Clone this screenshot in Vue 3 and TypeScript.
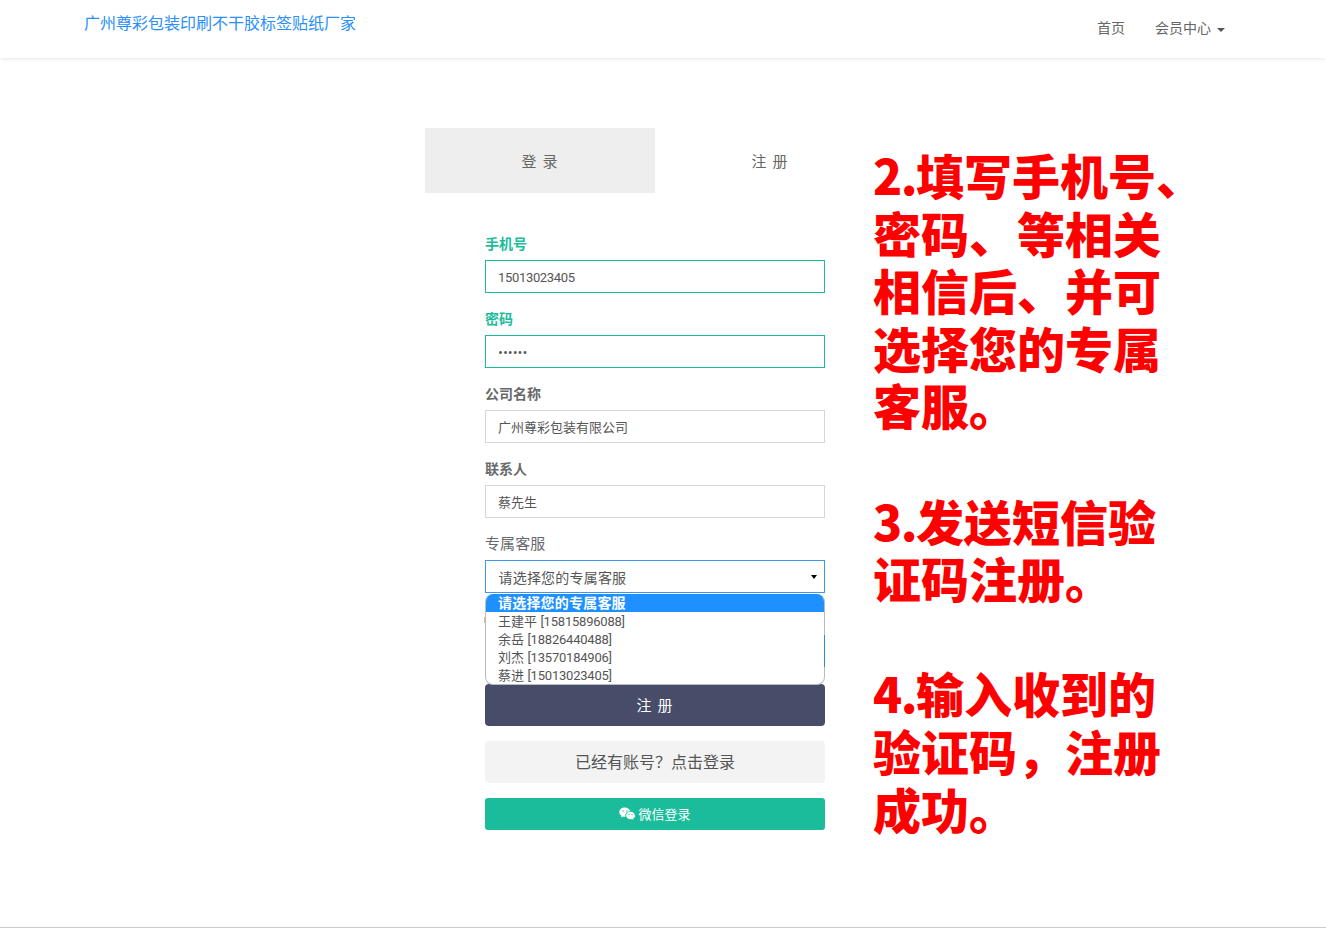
<script setup lang="ts">
interface Agent { name: string; phone: string }
const agents: Agent[] = [
  { name: '王建平', phone: '[15815896088]' },
  { name: '余岳', phone: '[18826440488]' },
  { name: '刘杰', phone: '[13570184906]' },
  { name: '蔡进', phone: '[15013023405]' },
]
</script>

<template>
  <div class="page">
    <header class="navbar">
      <a class="brand">广州尊彩包装印刷不干胶标签贴纸厂家</a>
      <nav class="nav">
        <a>首页</a>
        <a class="member">会员中心<i class="caret"></i></a>
      </nav>
    </header>

    <main class="main">
      <div class="panel">
        <div class="tabs">
          <div class="tab active">登 录</div>
          <div class="tab">注 册</div>
        </div>
        <form class="form" @submit.prevent>
          <div class="group valid">
            <label>手机号</label>
            <input class="digits" type="text" value="15013023405" />
          </div>
          <div class="group valid">
            <label>密码</label>
            <input type="password" value="123456" />
          </div>
          <div class="group">
            <label>公司名称</label>
            <input type="text" value="广州尊彩包装有限公司" />
          </div>
          <div class="group">
            <label>联系人</label>
            <input type="text" value="蔡先生" />
          </div>
          <div class="group select-group">
            <label class="plain">专属客服</label>
            <div class="select">
              <span>请选择您的专属客服</span>
              <i class="arrow"></i>
            </div>
            <ul class="options">
              <li class="selected">请选择您的专属客服</li>
              <li v-for="a in agents" :key="a.phone">{{ a.name }} <span class="phone">{{ a.phone }}</span></li>
            </ul>
          </div>
          <div class="group hidden-row">
            <i class="tick"></i>
            <i class="edge"></i>
          </div>
          <button type="submit" class="btn btn-dark">注 册</button>
          <button type="button" class="btn btn-light">已经有账号？点击登录</button>
          <button type="button" class="btn-wechat">
            <svg class="wechat" viewBox="0 0 16 14" width="16" height="14" aria-hidden="true">
              <path d="M6 .6C2.8.6.3 2.700.3 5.200c0 1.500.8 2.700 2.200 3.600l-.6 1.700 2-1.100c.6.2 1.300.3 2 .3h.6a4 4 0 0 1-.2-1.200c0-2.400 2.200-4.200 4.800-4.200h.5C10.100 2.200 8.200.6 6 .6z" fill="#fff" />
              <path d="M15.800 8.500c0-2-2-3.700-4.300-3.700-2.500 0-4.400 1.700-4.400 3.700s1.900 3.700 4.400 3.700c.5 0 1-.1 1.500-.2l1.500.8-.4-1.300c1.300-.8 2.700-1.800 2.700-3z" fill="#fff" />
              <circle cx="4.100" cy="3.900" r=".7" fill="#1abc9c" />
              <circle cx="7.900" cy="3.900" r=".7" fill="#1abc9c" />
              <circle cx="10" cy="7.400" r=".55" fill="#1abc9c" />
              <circle cx="13" cy="7.400" r=".55" fill="#1abc9c" />
            </svg>
            <span>微信登录</span>
          </button>
        </form>
        <div class="steps"><span class="num">2.</span>填写手机号、<br />密码、等相关<br />相信后、并可<br />选择您的专属<br />客服。<br /><br /><span class="num">3.</span>发送短信验<br />证码注册。<br /><br /><span class="num">4.</span>输入收到的<br />验证码，注册<br />成功。</div>
      </div>
    </main>
    <footer class="footer"></footer>
  </div>
</template>

<style>
html, body { margin: 0; padding: 0; background: #fff; overflow: hidden; }
</style>

<style scoped>
.page {
  height: 928px;
  display: flex;
  flex-direction: column;
  overflow: hidden;
  font-family: "Open Sans", "Noto Sans CJK SC", sans-serif;
  color: #676a6c;
}
.navbar {
  height: 58px;
  flex: none;
  display: flex;
  justify-content: space-between;
  padding: 0 101px 0 84px;
  box-shadow: 0 1px 4px rgba(0, 0, 0, 0.1);
  background: #fff;
}
.brand { font-size: 16px; line-height: 24px; margin-top: 11px; color: #2a8ff7; }
.nav { display: flex; gap: 30px; font-size: 14px; line-height: 20px; margin-top: 18px; color: #666; }
.member { display: flex; align-items: center; height: 20px; }
.caret {
  width: 0; height: 0; margin-left: 6px; margin-top: 3px;
  border-left: 4px solid transparent;
  border-right: 4px solid transparent;
  border-top: 4px solid #555;
}
.main { flex: 1; padding: 70px 0 0 425px; }
.panel { position: relative; width: 460px; }
.tabs { display: flex; height: 65px; }
.tab {
  width: 230px;
  display: flex; align-items: center; justify-content: center;
  font-size: 15px; letter-spacing: 1px; color: #666;
}
.tab.active { background: #eee; }
.form { padding: 41px 60px 0; display: flex; flex-direction: column; }
.group { position: relative; margin-bottom: 16px; }
label { display: block; height: 20px; line-height: 20px; margin-bottom: 6px; font-size: 14px; font-weight: 700; color: #676a6c; }
label.plain { font-size: 15px; line-height: 18px; font-weight: 400; letter-spacing: 0.1px; }
input {
  display: block; box-sizing: border-box; width: 100%; height: 33px;
  padding: 0 12px; border: 1px solid #d2d6de; border-radius: 0; outline: none;
  font-family: inherit; font-size: 13px; color: #555; background: #fff;
}
input.digits { font-family: Roboto, "Noto Sans CJK SC", sans-serif; letter-spacing: -0.33px; padding-top: 2px; }
.valid label { color: #1abc9c; }
.valid input { border-color: #1abc9c; }
.select {
  box-sizing: border-box; height: 33px; display: flex; align-items: center; justify-content: space-between;
  padding: 0 7px 0 12.500px; border: 1px solid #4096ee; font-size: 14px; letter-spacing: 0.2px; color: #555;
}
.arrow {
  width: 0; height: 0; margin-top: 1px;
  border-left: 3.5px solid transparent;
  border-right: 3.5px solid transparent;
  border-top: 4px solid #000;
}
.options {
  position: absolute; z-index: 2; left: 0; right: 0; top: 60px;
  box-sizing: border-box; height: 91px; margin: 0; padding: 0; list-style: none;
  background: #fff; border: 1px solid #bbb; border-top: 0; border-radius: 8px; overflow: hidden;
  font-size: 13px; color: #555;
}
.options li { height: 18px; line-height: 18px; padding-left: 12px; white-space: nowrap; }
.options li.selected { background: #1e90ff; color: #fff; font-size: 14px; font-weight: 700; letter-spacing: 0.2px; }
.phone { font-family: Roboto, sans-serif; letter-spacing: -0.22px; }
.hidden-row { height: 59px; }
.tick { position: absolute; z-index: 3; left: -1px; top: 8px; width: 1px; height: 6px; background: #d8b98c; }
.edge { position: absolute; z-index: 3; right: 0; top: 26px; width: 1px; height: 32px; background: #2a8fd8; }
.btn {
  height: 42px; border: 0; border-radius: 4px; margin-bottom: 15px; font-family: inherit; cursor: pointer; padding: 0 0 2px;
}
.btn-dark { background: #474c68; color: #fff; font-size: 15px; letter-spacing: 1px; }
.btn-light { background: #f3f3f3; color: #555; font-size: 16px; }
.btn-wechat {
  height: 32px; border: 0; border-radius: 3px; background: #1abc9c; color: #fff; padding: 0 0 1px;
  display: flex; align-items: center; justify-content: center; gap: 3px;
  font-family: inherit; font-size: 13px;
}
.steps {
  position: absolute; left: 448px; top: 18px; width: 320px;
  font-family: "Noto Sans CJK SC", sans-serif; font-size: 48px; line-height: 57.6px; font-weight: 900;
  color: #f00; white-space: nowrap;
}
.num { letter-spacing: -1.5px; }
.footer { flex: none; height: 1px; background: #ccc; }
</style>
